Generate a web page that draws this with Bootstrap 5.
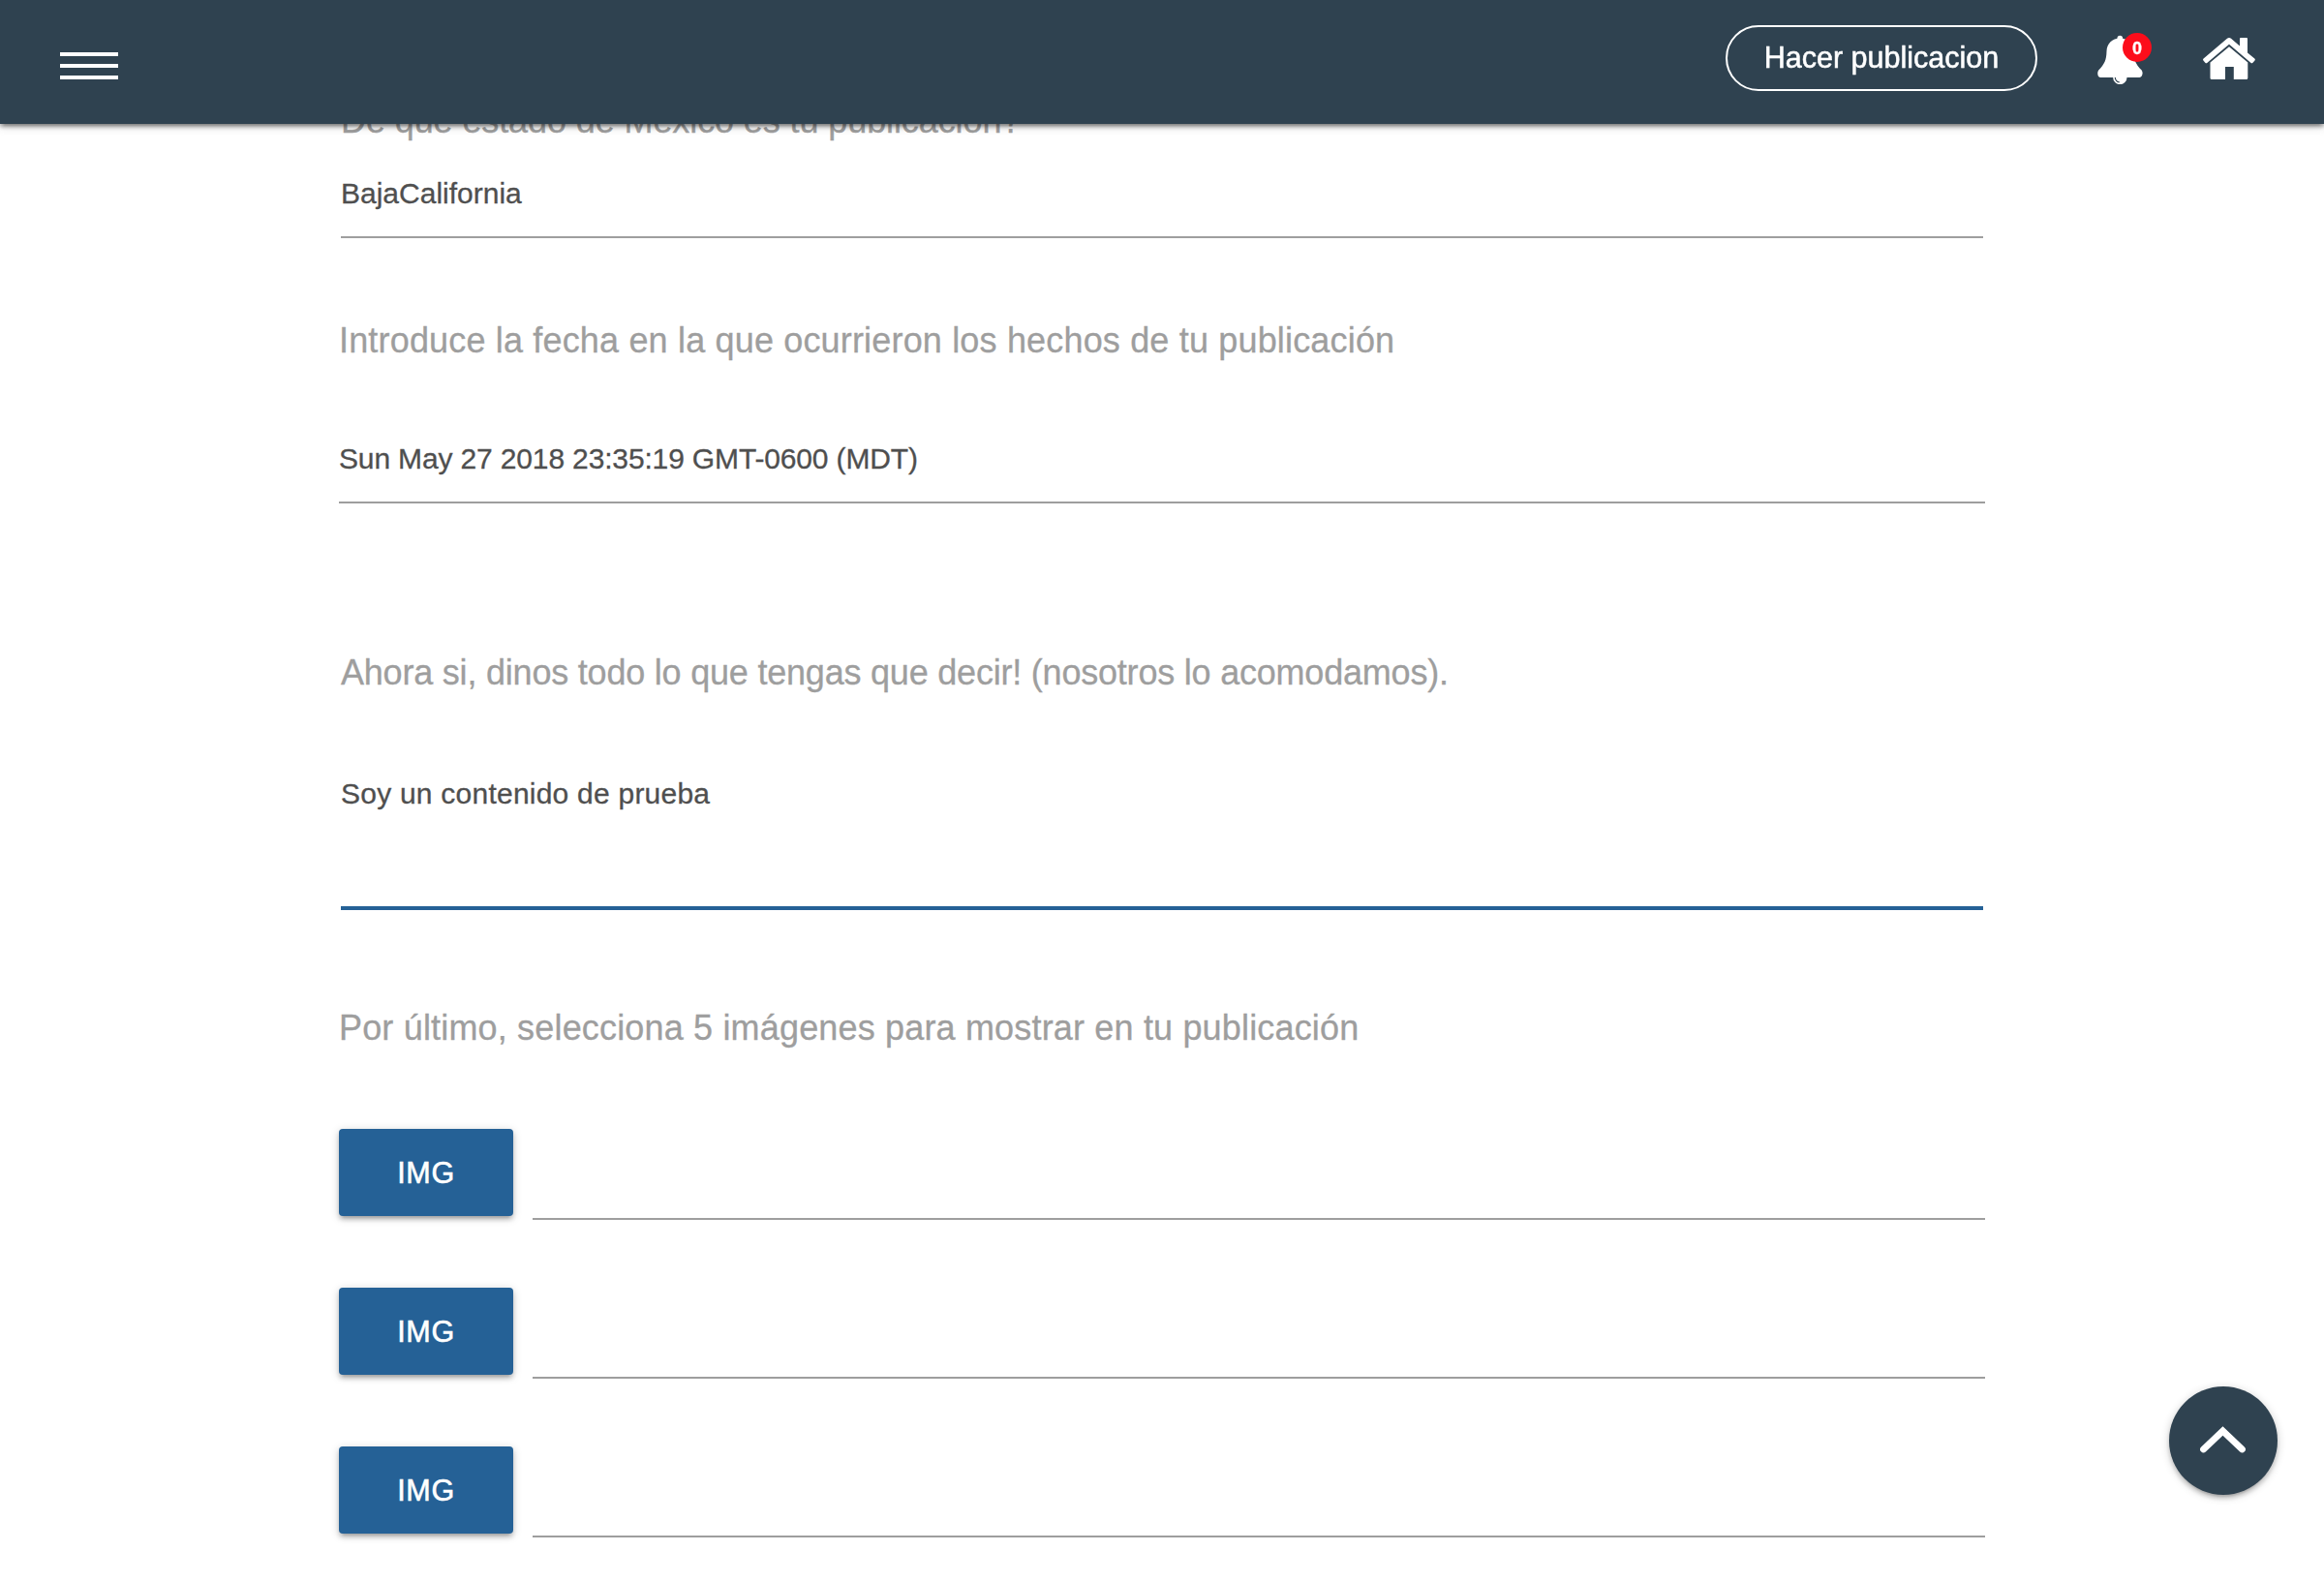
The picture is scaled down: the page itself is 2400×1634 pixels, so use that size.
<!DOCTYPE html>
<html lang="es">
<head>
<meta charset="utf-8">
<title>Hacer publicacion</title>
<link href="https://cdn.jsdelivr.net/npm/bootstrap@5.3.0/dist/css/bootstrap.min.css" rel="stylesheet">
<style>
  html, body { height: 100%; overflow: hidden; }
  body { font-family: "Liberation Sans", sans-serif; background: #fff; -webkit-text-stroke: .3px currentColor; }
  .topbar { height: 128px; background: #2f4250; padding: 0 71px 0 62px;
    box-shadow: 0 4px 4px 0 rgba(0,0,0,.14), 0 6px 2px -4px rgba(0,0,0,.12), 0 2px 10px 0 rgba(0,0,0,.2), 0 2px 4px rgba(0,0,0,.25); }
  .menu-btn { width: 60px; gap: 8px; margin-top: 8px; }
  .menu-btn span { height: 4px; background: #fff; }
  .publish-btn { width: 322px; height: 68px; margin-bottom: 8px; border: 2px solid #fff; border-radius: 34px; color: #fff; font-size: 30.5px; line-height: 40px; padding: 0 0 2px; -webkit-text-stroke: .5px currentColor; }
  .bell-link { width: 56px; height: 53px; margin: 0 53px 7px 62px; }
  .count-badge { width: 30px; height: 30px; left: 26px; top: 0; background: #fc0d1b; font-size: 18px; line-height: 32px; }
  .home-link { margin-bottom: 7px; }
  .post-form { width: 1700px; padding-top: 104px; }
  .field-title { font-size: 36px; line-height: 42px; height: 40px; color: #9e9e9e; letter-spacing: .17px; white-space: nowrap; }
  .title-state { letter-spacing: -.1px; }
  .title-story { letter-spacing: -.21px; }
  .field-input { display: block; width: 100%; height: 66px; padding: 0 0 24px; border: 0; border-bottom: 2px solid #9e9e9e; border-radius: 0; background: none; font-size: 30px; line-height: 40px; color: #4f4f4f; outline: 0; resize: none; }
  .inset { padding: 0 2px; }
  .gap-state { margin-top: 36px; }
  .gap-date { margin-top: 85px; }
  .gap-date-input { margin-top: 83px; letter-spacing: -.15px; }
  .gap-story { margin-top: 154px; }
  .story-input { margin-top: 86px; height: 140px; border-bottom: 4px solid #256196; letter-spacing: .23px; }
  .gap-images { margin-top: 101px; }
  .upload-list { margin-top: 85px; gap: 70px; }
  .upload-row { height: 94px; gap: 20px; }
  .img-btn { width: 180px; height: 90px; background: #256196; color: #fff; border: 0; border-radius: 4px; font-size: 30.5px; letter-spacing: .6px; padding: 2px 0 0; -webkit-text-stroke: .6px currentColor;
    box-shadow: 0 4px 4px 0 rgba(0,0,0,.14), 0 6px 2px -4px rgba(0,0,0,.12), 0 2px 10px 0 rgba(0,0,0,.2); }
  .upload-row .field-input { height: 94px; }
  .to-top { right: 48px; bottom: 90px; width: 112px; height: 112px; background: #2f4250;
    box-shadow: 0 4px 4px 0 rgba(0,0,0,.14), 0 6px 2px -4px rgba(0,0,0,.12), 0 2px 10px 0 rgba(0,0,0,.2); }
</style>
<script src="https://cdn.jsdelivr.net/npm/bootstrap@5.3.0/dist/js/bootstrap.bundle.min.js"></script>
</head>
<body>
<nav class="topbar fixed-top d-flex align-items-center">
  <a href="#" class="menu-btn d-flex flex-column" aria-label="Menu"><span></span><span></span><span></span></a>
  <button type="button" class="publish-btn btn ms-auto">Hacer publicacion</button>
  <a href="#" class="bell-link position-relative d-block">
    <svg class="d-block" width="48" height="53" viewBox="0 0 48 53" fill="#fff">
      <circle cx="23.3" cy="5.6" r="2.8"/>
      <path d="M23.3 5.5c-8 0-13.500 5.500-13.800 13.500C9.200 28 7.500 32 1.200 38.500-.6 41 .2 46 3 46h40.500c3 0 4-5 2.200-7.500C39 32 38 28 37.500 19 37 11 31 5.500 23.300 5.500z"/>
      <circle cx="23.300" cy="46" r="7.200"/>
      <path d="M18.300 46c.2 3 1.700 4.600 4.400 4.900" fill="none" stroke="#2f4250" stroke-width="1.100"/>
    </svg>
    <span class="count-badge position-absolute rounded-circle text-white fw-bold text-center">0</span>
  </a>
  <a href="#" class="home-link d-block">
    <svg class="d-block" width="54" height="43" viewBox="0 0 54 43" fill="#fff">
      <path d="M25 .8Q27 -.8 29 .8L38 8.600V1q0-1 1-1h6q1 0 1 1v14.500l7.300 6q1 1 .2 2l-2 2.300q-1 1-2.200 0L27 6.700 4.500 25.800q-1 1-2.200 0l-1.900-2.300q-.8-1 .2-2z"/>
      <path d="M27 9.200 46.300 25.500V41.500q0 1.500-1.500 1.500H31.800V30H23v13H9q-1.500 0-1.500-1.500V25.500z"/>
    </svg>
  </a>
</nav>

<main class="post-form mx-auto">
  <div class="inset">
    <div class="field-title title-state">De que estado de México es tu publicación?</div>
    <input class="field-input gap-state" type="text" value="BajaCalifornia">
  </div>
  <div class="field-title gap-date">Introduce la fecha en la que ocurrieron los hechos de tu publicación</div>
  <input class="field-input gap-date-input" type="text" value="Sun May 27 2018 23:35:19 GMT-0600 (MDT)">
  <div class="inset">
    <div class="field-title title-story gap-story">Ahora si, dinos todo lo que tengas que decir! (nosotros lo acomodamos).</div>
    <textarea class="field-input story-input">Soy un contenido de prueba</textarea>
  </div>
  <div class="field-title gap-images">Por último, selecciona 5 imágenes para mostrar en tu publicación</div>
  <div class="upload-list d-flex flex-column">
    <div class="upload-row d-flex"><button type="button" class="img-btn btn flex-shrink-0">IMG</button><input class="field-input" type="text"></div>
    <div class="upload-row d-flex"><button type="button" class="img-btn btn flex-shrink-0">IMG</button><input class="field-input" type="text"></div>
    <div class="upload-row d-flex"><button type="button" class="img-btn btn flex-shrink-0">IMG</button><input class="field-input" type="text"></div>
  </div>
</main>

<a href="#" class="to-top position-fixed rounded-circle d-flex align-items-center justify-content-center" aria-label="Subir">
  <svg width="50" height="30" viewBox="0 0 50 30" fill="none" stroke="#fff" stroke-width="6.800" stroke-linecap="round"><path d="M4.500 24 24.500 5 44.500 24"/></svg>
</a>
</body>
</html>
